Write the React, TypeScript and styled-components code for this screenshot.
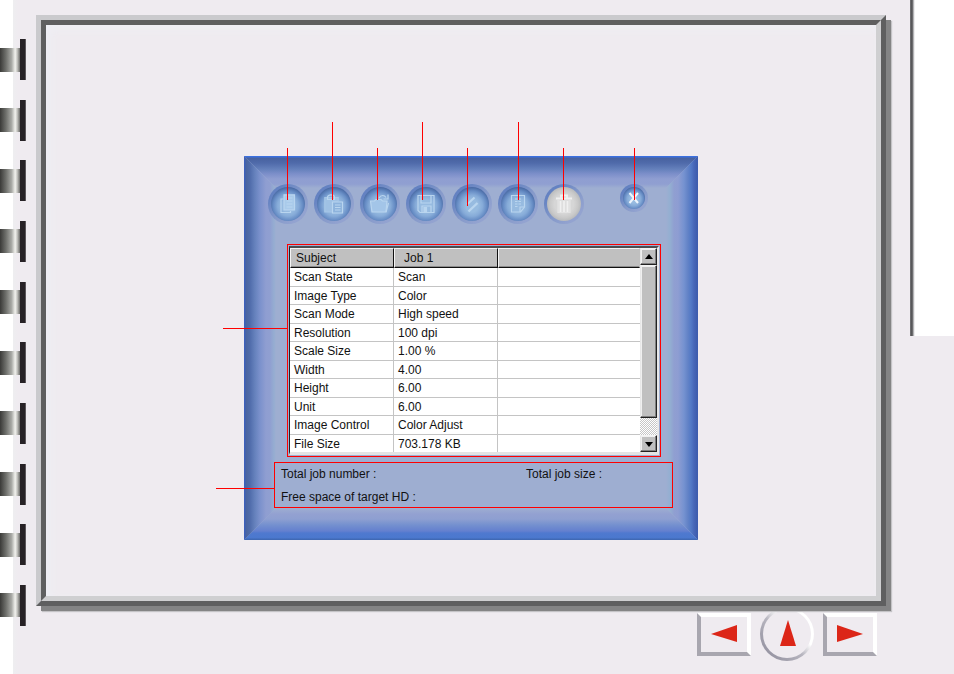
import React from "react";
import styled, { createGlobalStyle, css } from "styled-components";

const paper = "#efebf0";
const red = "#ff0000";
const black = "#111";

const GlobalStyle = createGlobalStyle`
  * { box-sizing: border-box; }
  body { margin: 0; background: ${paper}; font-family: "Liberation Sans", Arial, sans-serif; }
  button { font: inherit; padding: 0; border: 0; cursor: pointer; }
`;

const Page = styled.div`
  display: grid;
  grid-template-columns: 36px minmax(0, 1fr) 68px;
  min-height: 100vh;
  background: linear-gradient(90deg, #fff 13px, #eeeef0 13px, ${paper} 18px);
`;

/* ---------- binder rings ---------- */

const Rail = styled.div`
  display: flex;
  flex-direction: column;
  justify-content: space-between;
  padding: 39px 0 48px;
`;

const Ring = styled.div`
  display: flex;
  align-items: center;
  height: 41px;
`;

const RingTube = styled.div`
  width: 20px;
  height: 24px;
  background: linear-gradient(90deg, #3a3a38, #6f706c 30%, #a9aaa6 58%, #f2f2ee 76%, #c5c5c1 86%, #6a6a68);
`;

const RingSlot = styled.div`
  width: 6px;
  height: 41px;
  background: #272226;
  border-right: 1px solid #5b565a;
`;

/* ---------- main column ---------- */

const Main = styled.main`
  display: flex;
  flex-direction: column;
  padding-top: 15px;
`;

const Frame = styled.section`
  position: relative;
  z-index: 1;
  flex: 1;
  border: 5px solid;
  border-color: #cacacd #5f5f60 #5f5f60 #cacacd;
  box-shadow: 5px 5px 0 #848485, 6px 6px 1px #c4c3c6;
`;

const FrameInner = styled.div`
  display: flex;
  justify-content: center;
  align-items: flex-start;
  height: 100%;
  padding: 131px 0 56px 20px;
  border: 5px solid;
  border-color: #5f5f60 #cfcfd1 #cfcfd1 #5f5f60;
  background: ${paper};
  box-shadow: inset 4px 4px 8px #eeeff5;
`;

const Pager = styled.nav`
  display: flex;
  justify-content: flex-end;
  align-items: center;
  gap: 9px;
  height: 68px;
  padding: 0 9px 12px 0;
`;

const PagerButton = styled.button<{ $round?: boolean }>`
  display: grid;
  place-items: center;
  width: 54px;
  ${(p) =>
    p.$round
      ? css`
          height: 54px;
          border: 3px solid transparent;
          border-radius: 50%;
          background: linear-gradient(${paper}, ${paper}) padding-box,
            linear-gradient(45deg, #9896a4 15%, #b7b5bf 45%, #fff 62%) border-box;
        `
      : css`
          height: 43px;
          border: 4px solid;
          border-color: #fff #fff #a8a6af #a8a6af;
          background: ${paper};
        `}
`;

/* ---------- right edge ---------- */

const Notch = styled.aside`
  height: 336px;
  margin-left: 24px;
  padding-left: 5px;
  background: linear-gradient(90deg, #77777a, #4d4d4f 2px, #8b8b8d 3px, #dcdcde 4px, #fff 5px);
`;

/* ---------- dialog ---------- */

const Dialog = styled.div`
  position: relative;
  width: 454px;
  padding: 28px 24px 32px;
  background: #9eaed1;
  color: ${black};
  font-size: 12px;
  line-height: 14px;
`;

type Side = "top" | "right" | "bottom" | "left";

const edgeStyles = {
  top: css`
    top: 0; left: 0; right: 0; height: 32px;
    clip-path: polygon(0 0, 100% 0, calc(100% - 32px) 100%, 32px 100%);
    background: linear-gradient(180deg, #3b70e0 1px, #48629f 2px, #4f6aaa 7px, #6480bb 13px, #7d8fca 18px, #8f9ed1 23px, #909fd1 28px, #9eaed1);
  `,
  right: css`
    top: 0; bottom: 0; right: 0; width: 32px;
    clip-path: polygon(0 32px, 100% 0, 100% 100%, 0 calc(100% - 32px));
    background: linear-gradient(270deg, #3e5dae 1px, #4767b8 4px, #5279c6 7px, #6282c6 10px, #7592d0 14px, #8e9dd2 20px, #909fd1 24px, #93afd1 28px, #9eaed1);
  `,
  bottom: css`
    left: 0; right: 0; bottom: 0; height: 32px;
    clip-path: polygon(32px 0, calc(100% - 32px) 0, 100% 100%, 0 100%);
    background: linear-gradient(0deg, #4069b5 1px, #4b78ce 2px, #4f79cf 7px, #6480cf 9px, #7490cf 15px, #8e9fd1 21px, #93a1d1 26px, #9eaed1);
  `,
  left: css`
    top: 0; bottom: 0; left: 0; width: 32px;
    clip-path: polygon(0 0, 100% 32px, 100% calc(100% - 32px), 0 100%);
    background: linear-gradient(90deg, #3d60ba 1px, #4a649f 2px, #506cab 6px, #6682bd 11px, #7b91cc 16px, #8f9ed1 22px, #909fd1 26px, #95add1 30px, #9eaed1);
  `,
};

const Edge = styled.span<{ $side: Side }>`
  position: absolute;
  ${(p) => edgeStyles[p.$side]}
`;

const Toolbar = styled.div`
  position: relative;
  display: flex;
  align-items: flex-start;
  gap: 6px;
  padding-right: 26px;
`;

const RoundButton = styled.button<{ $tone?: "blue" | "grey"; $small?: boolean }>`
  display: grid;
  place-items: center;
  width: ${(p) => (p.$small ? 28 : 40)}px;
  height: ${(p) => (p.$small ? 28 : 40)}px;
  margin-left: ${(p) => (p.$small ? "auto" : "0")};
  border: 3px solid transparent;
  border-radius: 50%;
  color: ${(p) => (p.$tone === "grey" ? "#f0f0f0" : "#b9d5ef")};
  background: ${(p) =>
      p.$tone === "grey"
        ? "radial-gradient(circle, #d6d6d6 40%, #c9c9c9 58%, #b9bbbd 70%)"
        : "radial-gradient(circle at 50% 55%, #97bbe0 25%, #86abd8 42%, #678dc5 58%, #4b6ca6 72%)"}
      padding-box,
    linear-gradient(135deg, #6482c2 20%, #869aca 55%, #93a3d0 80%) border-box;
`;

const TableOutline = styled.div`
  position: relative;
  margin: 20px 13px 0 19px;
  padding: 1px;
  border: 1px solid ${red};
`;

const Well = styled.div`
  display: flex;
  height: 209px;
  overflow: hidden;
  border-style: solid;
  border-width: 2px 2px 3px 1px;
  border-color: #4c4d50 #e8e8e8 #e4e4e4 #222;
  background: #fff;
`;

const JobTable = styled.table`
  flex: 1;
  align-self: flex-start;
  table-layout: fixed;
  border-collapse: separate;
  border-spacing: 0;

  th,
  td {
    padding: 0 4px;
    text-align: left;
    font-weight: normal;
    white-space: nowrap;
    line-height: 14px;
  }
`;

const HeadCell = styled.th<{ $indent?: boolean; $open?: boolean }>`
  width: ${(p) => (p.$open ? "auto" : "104px")};
  height: 20px;
  && {
    padding-left: ${(p) => (p.$indent ? 9 : 5)}px;
  }
  background: #c0c0c0;
  border: 1px solid;
  border-color: #f4f4f4 ${(p) => (p.$open ? "#c0c0c0" : black)} ${black} #f4f4f4;
  box-shadow: inset 0 -1px #8c8c8c;
`;

const Row = styled.tr`
  height: 18px;

  &:nth-child(odd) {
    height: 19px;
  }
`;

const Cell = styled.td`
  border-right: 1px solid #c4c4c4;
  border-bottom: 1px solid #c4c4c4;

  &:last-child {
    border-right: 0;
  }
`;

const ScrollBar = styled.div`
  display: flex;
  flex-direction: column;
  width: 17px;
  background: repeating-conic-gradient(#c6c6c6 0 25%, #fff 0 50%) 0 0 / 2px 2px;
`;

const raised = css`
  background: #c0c0c0;
  border: 1px solid;
  border-color: #f4f4f4 #222 #222 #e8e8e8;
  box-shadow: inset -1px -1px #808080, inset 1px 1px #f0f0f0;
`;

const ScrollButton = styled.button`
  display: grid;
  place-items: center;
  height: 17px;
  ${raised}
`;

const Thumb = styled.div`
  height: 153px;
  margin-bottom: auto;
  ${raised}
`;

const Status = styled.dl`
  position: relative;
  display: grid;
  grid-template-columns: 245px 1fr;
  row-gap: 9px;
  height: 46px;
  margin: 5px 1px 0 6px;
  padding: 4px 6px;
  border: 1px solid ${red};

  dt {
    white-space: nowrap;
  }
`;

/* Thin pointer lines laid over the dialog */
const Leader = styled.span<{ $x: number; $y: number; $length: number; $flat?: boolean }>`
  position: absolute;
  left: ${(p) => p.$x}px;
  top: ${(p) => p.$y}px;
  width: ${(p) => (p.$flat ? p.$length : 1)}px;
  height: ${(p) => (p.$flat ? 1 : p.$length)}px;
  background: ${red};
  pointer-events: none;
`;

const Stroke = styled.svg.attrs({ viewBox: "0 0 22 22", width: 22, height: 22 })`
  display: block;
  fill: none;
  stroke: currentColor;
  stroke-width: 1.2;
`;

const tools = [
  {
    label: "Job list",
    art: (
      <>
        <path d="M6.5 6H4v13.5h9.5V18" />
        <path d="M7 1.8h10.5v15H7z" fill="#a9caea" />
        <path d="M9.5 5h6M9.5 8h6M9.5 11h6M9.5 14h6" />
      </>
    ),
  },
  {
    label: "Paste job",
    art: (
      <>
        <path d="M9 19H1.8V4.5h13.4V8" fill="#9fc1e4" stroke="#a6c6e7" />
        <path d="M4.500 4.500C4.500 1 11.500 1 11.500 4.500v2h-7z" />
        <path d="M9.5 9h10v11h-10z" fill="#8db3dc" />
        <path d="M12 12h5.5M12 14.5h5.5M12 17h5.5" />
      </>
    ),
  },
  {
    label: "Open job",
    art: (
      <>
        <path d="M3 19 1.5 8h4L7 6.5h5L13.5 8H18l-1 11z" fill="#a3c5e8" />
        <path d="M17 19 19.5 10" />
        <path d="M10 5c2-3.5 5.5-3 7-.5M19 1.5V6h-4.5" />
      </>
    ),
  },
  {
    label: "Save job",
    art: (
      <>
        <path d="M3 2.5h16v17H5l-2-2z" />
        <path d="M6 3v7h10V3M7 19v-6h9v6" />
        <path d="M9 14.5h2.5v4H9z" fill="currentColor" />
      </>
    ),
  },
  {
    label: "Edit job",
    art: (
      <>
        <path d="M6 11.5 13.5 4.5" strokeWidth="2" />
        <path d="M7.5 18.5 16.5 10" strokeWidth="2.4" />
      </>
    ),
  },
  {
    label: "Job properties",
    art: (
      <>
        <path d="M4.5 2.5h13V14l-4 5h-9z" />
        <path d="M17 14h-4v5" />
        <path d="M8 6h7M8 8.5h7M8 11h6M8 13.5h3" strokeDasharray="2.5 1" />
      </>
    ),
  },
  {
    label: "Delete job",
    grey: true,
    art: (
      <>
        <path d="M3 5.500h16M8 5V2.500h6V5" strokeWidth="1.8" />
        <path d="M5 7v12.500h12V7" fill="#dedede" stroke="#e3e3e3" />
        <path d="M7.5 8v11M11 8v11M14.5 8v11" strokeWidth="1.6" />
      </>
    ),
  },
];

const leaders = [
  { x: 43, y: -8, length: 52 },
  { x: 88, y: -34, length: 78 },
  { x: 133, y: -8, length: 52 },
  { x: 178, y: -34, length: 78 },
  { x: 223, y: -8, length: 58 },
  { x: 274, y: -34, length: 78 },
  { x: 319, y: -8, length: 52 },
  { x: 390, y: -8, length: 52 },
];

const rows = [
  ["Scan State", "Scan"],
  ["Image Type", "Color"],
  ["Scan Mode", "High speed"],
  ["Resolution", "100 dpi"],
  ["Scale Size", "1.00 %"],
  ["Width", "4.00"],
  ["Height", "6.00"],
  ["Unit", "6.00"],
  ["Image Control", "Color Adjust"],
  ["File Size", "703.178 KB"],
];

const sides: Side[] = ["top", "right", "bottom", "left"];

function Triangle({ points }: { points: string }) {
  return (
    <svg width="10" height="10" viewBox="0 0 10 10" aria-hidden="true">
      <polygon points={points} />
    </svg>
  );
}

export default function App() {
  return (
    <>
      <GlobalStyle />
      <Page>
        <Rail aria-hidden="true">
          {Array.from({ length: 10 }, (_, i) => (
            <Ring key={i}>
              <RingTube />
              <RingSlot />
            </Ring>
          ))}
        </Rail>

        <Main>
          <Frame>
            <FrameInner>
              <Dialog>
                {sides.map((side) => (
                  <Edge key={side} $side={side} />
                ))}
                <Toolbar>
                  {tools.map((tool) => (
                    <RoundButton key={tool.label} type="button" aria-label={tool.label} $tone={tool.grey ? "grey" : "blue"}>
                      <Stroke>{tool.art}</Stroke>
                    </RoundButton>
                  ))}
                  <RoundButton type="button" aria-label="Close" $small>
                    <svg width="14" height="14" viewBox="0 0 14 14" fill="none" stroke="#eef5fc" strokeWidth="2">
                      <path d="M2.5 2 11 12M11 2 2.5 12" />
                    </svg>
                  </RoundButton>
                </Toolbar>

                <TableOutline>
                  <Well>
                    <JobTable>
                      <thead>
                        <tr>
                          <HeadCell scope="col">Subject</HeadCell>
                          <HeadCell scope="col" $indent>
                            Job 1
                          </HeadCell>
                          <HeadCell $open />
                        </tr>
                      </thead>
                      <tbody>
                        {rows.map(([name, value]) => (
                          <Row key={name}>
                            <Cell>{name}</Cell>
                            <Cell>{value}</Cell>
                            <Cell />
                          </Row>
                        ))}
                      </tbody>
                    </JobTable>
                    <ScrollBar>
                      <ScrollButton type="button" aria-label="Scroll up">
                        <Triangle points="5,2 9,7 1,7" />
                      </ScrollButton>
                      <Thumb />
                      <ScrollButton type="button" aria-label="Scroll down">
                        <Triangle points="1,3 9,3 5,8" />
                      </ScrollButton>
                    </ScrollBar>
                  </Well>
                </TableOutline>

                <Status>
                  <dt>Total job number :</dt>
                  <dt>Total job size :</dt>
                  <dt>Free space of target HD :</dt>
                </Status>

                {leaders.map((l) => (
                  <Leader key={l.x} $x={l.x} $y={l.y} $length={l.length} />
                ))}
                <Leader $flat $x={-21} $y={172} $length={64} />
                <Leader $flat $x={-28} $y={332} $length={58} />
              </Dialog>
            </FrameInner>
          </Frame>

          <Pager aria-label="Pages">
            <PagerButton type="button" aria-label="Previous page">
              <svg width="28" height="20" viewBox="0 0 28 20" fill="#dc2618" aria-hidden="true">
                <polygon points="1,10 27,1 27,18" />
              </svg>
            </PagerButton>
            <PagerButton type="button" aria-label="Contents" $round>
              <svg width="20" height="28" viewBox="0 0 20 28" fill="#dc2618" aria-hidden="true">
                <polygon points="11,0 19,26 3,26" />
              </svg>
            </PagerButton>
            <PagerButton type="button" aria-label="Next page">
              <svg width="28" height="20" viewBox="0 0 28 20" fill="#dc2618" aria-hidden="true">
                <polygon points="27,10 1,1 1,18" />
              </svg>
            </PagerButton>
          </Pager>
        </Main>

        <Notch />
      </Page>
    </>
  );
}
